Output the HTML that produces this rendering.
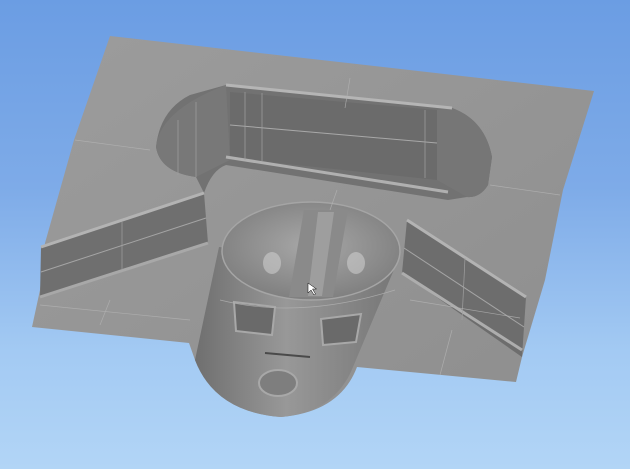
<!DOCTYPE html>
<html><head><style>
html,body{margin:0;padding:0;width:630px;height:469px;overflow:hidden}
body{background:linear-gradient(180deg,#6b9de3 0%,#7eabe8 40%,#a3caf3 75%,#b2d5f6 100%)}
</style></head><body>
<svg width="630" height="469" viewBox="0 0 630 469" xmlns="http://www.w3.org/2000/svg">
<defs>
<linearGradient id="plate" x1="0" y1="0" x2="1" y2="1">
<stop offset="0" stop-color="#9c9c9c"/><stop offset="1" stop-color="#8e8e8e"/></linearGradient>
<radialGradient id="dome" cx="0.5" cy="0.45" r="0.6">
<stop offset="0" stop-color="#a8a8a8"/><stop offset="1" stop-color="#7c7c7c"/></radialGradient>
<linearGradient id="cyl" x1="0" y1="0" x2="1" y2="0">
<stop offset="0" stop-color="#6f6f6f"/><stop offset="0.45" stop-color="#989898"/><stop offset="1" stop-color="#767676"/></linearGradient>
</defs>
<path d="M110,36 L594,91 L563,190 L545,280 L522,357 L516,382 L357,367 Q340,412 281,417 Q215,412 195,360 L189,343 L32,327 L40,290 L45,243 L74,140 Z" fill="url(#plate)"/>
<path d="M226,85 L452,108 Q485,120 492,157 L488,185 Q480,198 467,197 L448,200 L226,165 Q212,170 204,193 L196,177 Q160,172 156,147 Q160,110 190,95 Z" fill="#727272"/>
<path d="M156,147 Q160,110 226,85 L230,160 Q210,170 196,177 Q160,172 156,147Z" fill="#787878"/>
<path d="M230,92 L437,110 L437,180 L230,158 Z" fill="#6b6b6b"/>
<path d="M437,110 L452,108 Q485,120 492,157 L488,185 Q480,198 467,197 L437,180 Z" fill="#767676"/>
<path d="M230,125 L437,143" stroke="#a8a8a8" stroke-width="1"/>
<path d="M226,157 L448,192" stroke="#b0b0b0" stroke-width="3"/>
<path d="M226,85 L452,108" stroke="#b5b5b5" stroke-width="3"/>
<g stroke="#a0a0a0" stroke-width="0.7"><path d="M245,92 V160 M262,93 V162 M425,110 V178 M178,120 V175 M196,102 V177"/></g>
<path d="M41,247 L204,193 L208,243 L40,297 Z" fill="#6f6f6f"/>
<path d="M41,247 L204,193" stroke="#b3b3b3" stroke-width="3"/>
<path d="M41,272 L206,218" stroke="#a5a5a5" stroke-width="1"/>
<path d="M40,297 L208,243" stroke="#a8a8a8" stroke-width="3"/>
<path d="M122,222 L122,270" stroke="#a0a0a0" stroke-width="0.7"/>
<path d="M407,220 L526,297 L522,357 L402,273 Z" fill="#6d6d6d"/>
<path d="M407,220 L526,297" stroke="#b3b3b3" stroke-width="3"/>
<path d="M404,248 L524,327" stroke="#a5a5a5" stroke-width="1"/>
<path d="M402,273 L522,350" stroke="#adadad" stroke-width="3"/>
<path d="M465,258 L462,320" stroke="#a0a0a0" stroke-width="0.7"/>
<path d="M219,247 L398,260 L353,367 Q335,412 281,417 Q215,412 195,360 Z" fill="url(#cyl)"/>
<ellipse cx="311" cy="251" rx="89" ry="49" fill="url(#dome)" stroke="#a5a5a5" stroke-width="1.5"/>
<path d="M304,210 L348,210 L333,297 L289,297 Z" fill="#8a8a8a"/>
<path d="M318,212 L334,212 L322,296 L308,296 Z" fill="#9e9e9e"/>
<ellipse cx="272" cy="263" rx="9" ry="11" fill="#d2d2d2" opacity="0.55"/>
<ellipse cx="356" cy="263" rx="9" ry="11" fill="#d2d2d2" opacity="0.55"/>
<path d="M234,302 L275,307 L272,335 L236,331 Z" fill="#6a6a6a" stroke="#a8a8a8" stroke-width="2"/>
<path d="M321,319 L361,314 L356,342 L323,345 Z" fill="#6a6a6a" stroke="#a8a8a8" stroke-width="2"/>
<path d="M265,353 L310,357" stroke="#4a4a4a" stroke-width="2"/>
<ellipse cx="278" cy="383" rx="19" ry="13" fill="#7e7e7e" stroke="#a8a8a8" stroke-width="2"/>
<path d="M308,283 l0,10 l3,-3 l3,5 l1.5,-1 l-3,-5 l4,0 z" fill="#fff" stroke="#000" stroke-width="0.5"/>
<g stroke="#b4b4b4" stroke-width="0.7" fill="none" opacity="0.8">
<path d="M350,78 L345,108"/>
<path d="M337,190 L330,210"/>
<path d="M75,140 L150,150"/>
<path d="M490,185 L560,195"/>
<path d="M100,325 L110,300"/>
<path d="M440,375 L452,330"/>
<path d="M40,305 L190,320"/>
<path d="M410,300 L520,318"/>
<path d="M220,300 Q300,320 395,290"/>
</g>
</svg>
</body></html>
